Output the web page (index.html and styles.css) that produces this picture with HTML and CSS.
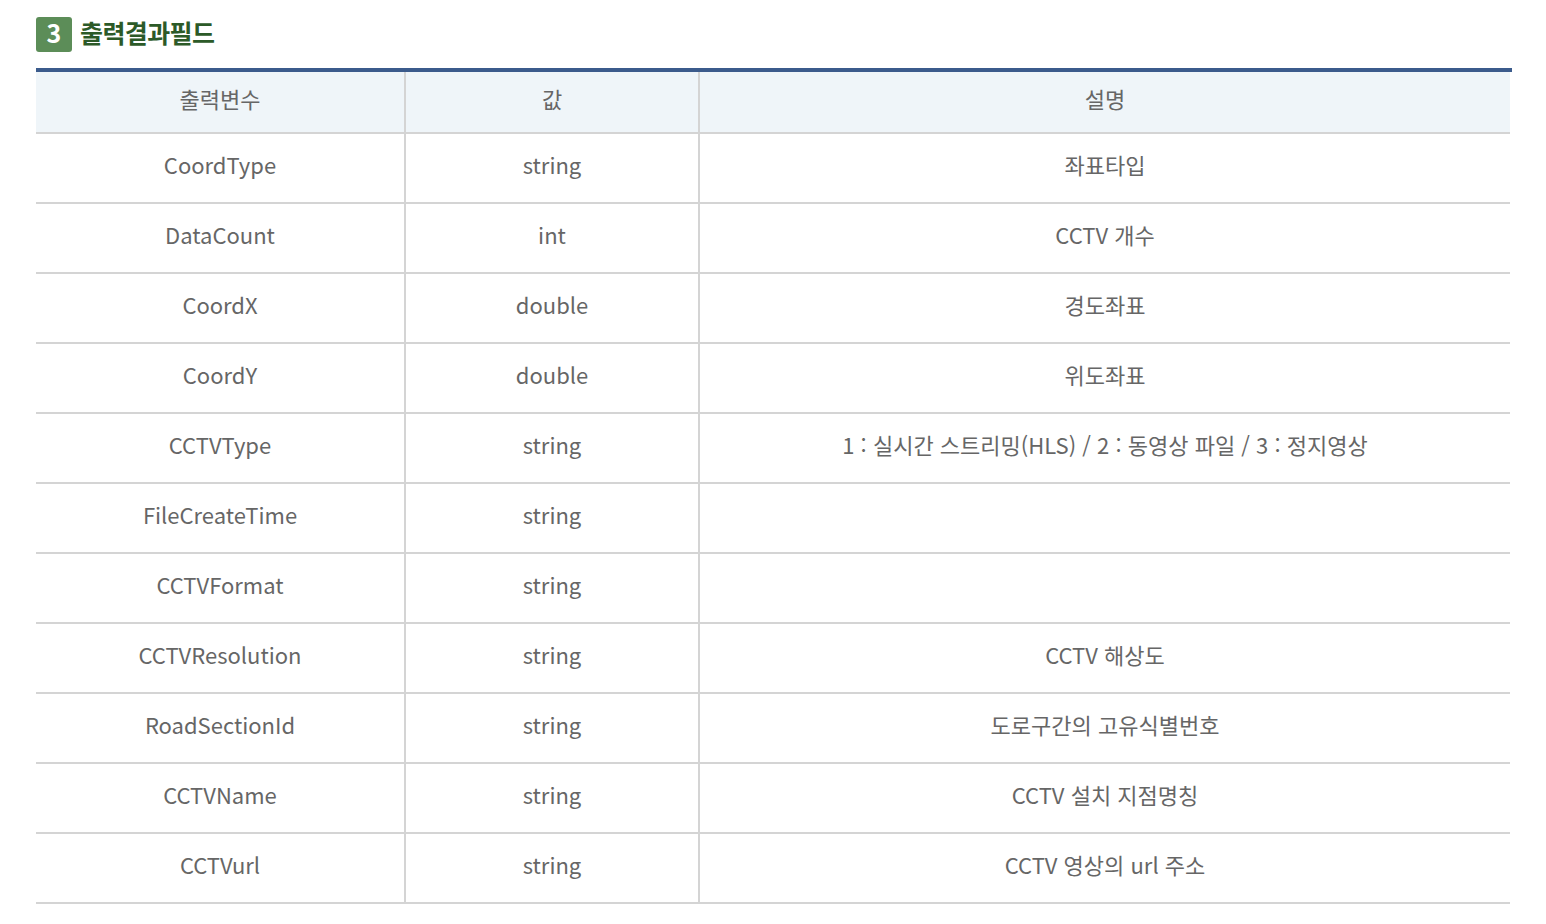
FILE: index.html
```html
<!DOCTYPE html>
<html lang="ko">
<head>
<meta charset="utf-8">
<title>출력결과필드</title>
<link rel="stylesheet" href="styles.css">
</head>
<body>
<div class="page">
  <h3 class="title"><span class="num">3</span><span class="label">출력결과필드</span></h3>
  <div class="table-wrap">
    <table class="fields">
      <colgroup>
        <col class="c1"><col class="c2"><col class="c3">
      </colgroup>
      <thead>
        <tr><th>출력변수</th><th>값</th><th>설명</th></tr>
      </thead>
      <tbody>
        <tr><td>CoordType</td><td>string</td><td>좌표타입</td></tr>
        <tr><td>DataCount</td><td>int</td><td>CCTV 개수</td></tr>
        <tr><td>CoordX</td><td>double</td><td>경도좌표</td></tr>
        <tr><td>CoordY</td><td>double</td><td>위도좌표</td></tr>
        <tr><td>CCTVType</td><td>string</td><td>1 : 실시간 스트리밍(HLS) / 2 : 동영상 파일 / 3 : 정지영상</td></tr>
        <tr><td>FileCreateTime</td><td>string</td><td></td></tr>
        <tr><td>CCTVFormat</td><td>string</td><td></td></tr>
        <tr><td>CCTVResolution</td><td>string</td><td>CCTV 해상도</td></tr>
        <tr><td>RoadSectionId</td><td>string</td><td>도로구간의 고유식별번호</td></tr>
        <tr><td>CCTVName</td><td>string</td><td>CCTV 설치 지점명칭</td></tr>
        <tr><td>CCTVurl</td><td>string</td><td>CCTV 영상의 url 주소</td></tr>
      </tbody>
    </table>
  </div>
</div>
</body>
</html>
```
FILE: styles.css
```css
html, body {
  margin: 0;
  padding: 0;
  background: #ffffff;
}
body {
  font-family: "Noto Sans CJK KR", "Noto Sans", sans-serif;
  color: #666666;
}
.page {
  padding: 17px 0 0 36px;
  width: 1476px;
}
.title {
  margin: 0;
  display: flex;
  align-items: center;
  gap: 8px;
  height: 35px;
}
.num {
  width: 36px;
  height: 35px;
  box-sizing: border-box;
  padding-bottom: 4px;
  background: #5c8d58;
  color: #ffffff;
  border-radius: 3px;
  display: flex;
  align-items: center;
  justify-content: center;
  font-size: 25px;
  font-weight: 700;
  line-height: 1;
}
.label {
  font-size: 25px;
  font-weight: 700;
  color: #2c5a28;
  letter-spacing: -0.6px;
  line-height: 1;
  padding-bottom: 5px;
}
.table-wrap {
  margin-top: 16px;
  border-top: 4px solid #3b5b8c;
}
.fields {
  width: 1474px;
  border-collapse: collapse;
  table-layout: fixed;
}
.c1 { width: 369px; }
.c2 { width: 294px; }
.c3 { width: auto; }
.fields th,
.fields td {
  text-align: center;
  font-size: 22px;
  font-weight: 400;
  color: #666666;
  padding: 0 0 8px 0;
  border-bottom: 2px solid #d4d4d4;
  border-left: 2px solid #d4d4d4;
}
.fields th:first-child,
.fields td:first-child {
  border-left: none;
}
.fields th {
  height: 52px;
  background: #eff5f9;
}
.fields td {
  height: 60px;
}
```
